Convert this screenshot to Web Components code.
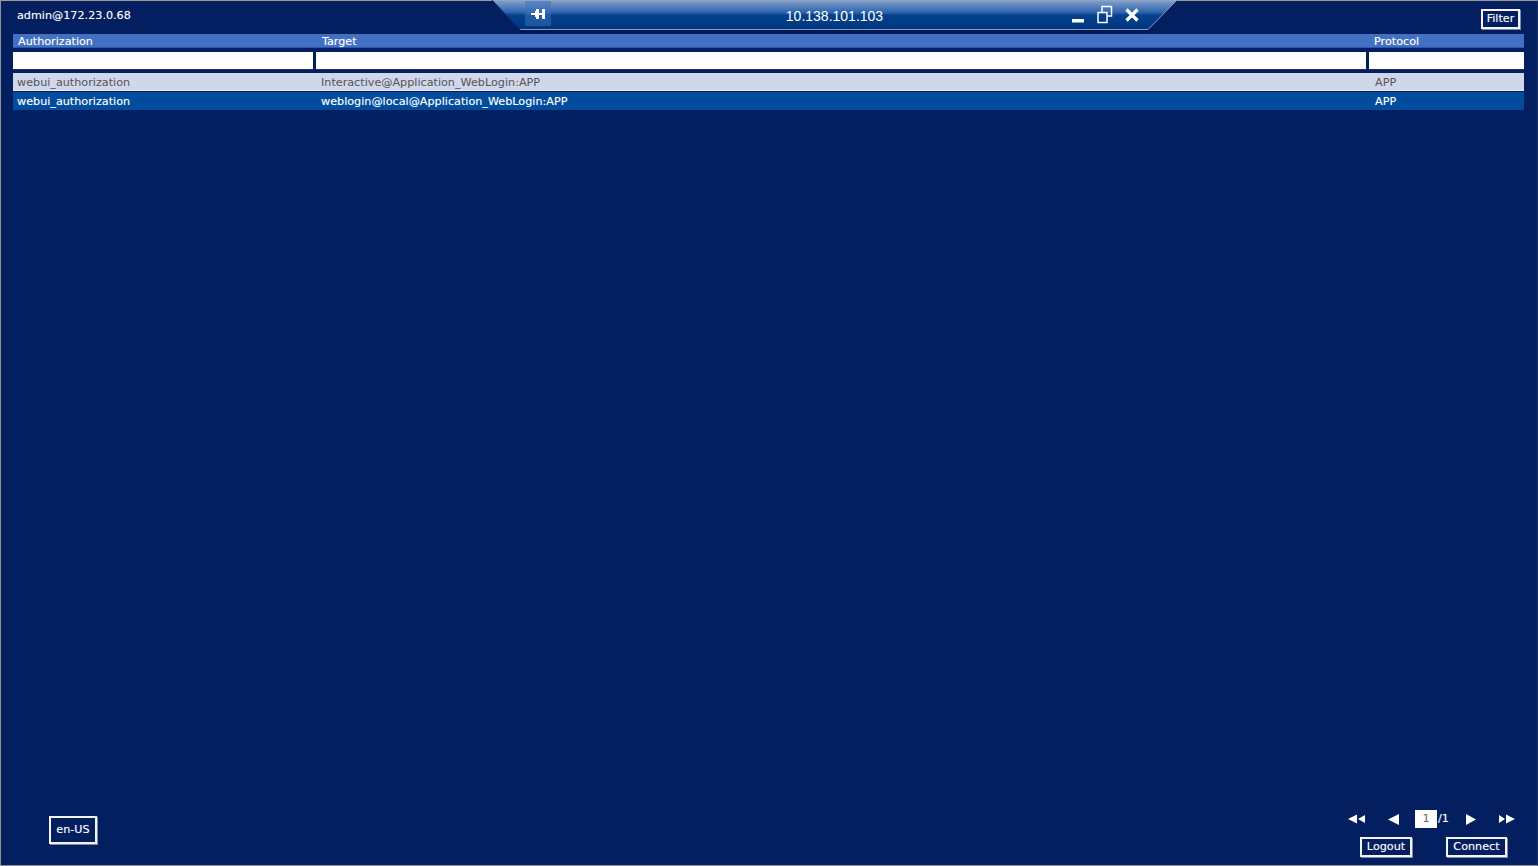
<!DOCTYPE html>
<html lang="en"><head><meta charset="utf-8"><title>Authorization</title>
<style>
html,body{margin:0;padding:0;height:100%;background:#031f60}
body{font:11.2px/14px "DejaVu Sans",sans-serif;color:#fff;overflow:hidden}
</style></head>
<body>
<x-app>
  <x-topbar slot="top" user="admin@172.23.0.68" host="10.138.101.103"></x-topbar>
  <x-grid slot="table">
    <x-row kind="head"><span>Authorization</span><span>Target</span><span>Protocol</span></x-row>
    <x-row kind="filter"></x-row>
    <x-row kind="light"><span>webui_authorization</span><span>Interactive@Application_WebLogin:APP</span><span>APP</span></x-row>
    <x-row kind="selected"><span>webui_authorization</span><span>weblogin@local@Application_WebLogin:APP</span><span>APP</span></x-row>
  </x-grid>
  <x-footer slot="bottom"></x-footer>
</x-app>

<script>
function def(name, html, setup){
  customElements.define(name, class extends HTMLElement{
    constructor(){super();this.attachShadow({mode:'open'}).innerHTML=html;}
    connectedCallback(){ if(setup) setup.call(this,this.shadowRoot); }
  });
}
const FONT='font-family:"DejaVu Sans",sans-serif;font-size:11.2px;line-height:14px;';
const GLOW='text-shadow:0 0 1px rgba(255,255,255,.35);';

def('x-app',`<style>
:host{display:flex;flex-direction:column;box-sizing:border-box;width:1538px;height:866px;background:#031f60;
border-top:1px solid #9a9a92;border-left:1px solid #8d918f;border-bottom:1px solid #8d918f;border-right:1px solid #1a2f66;color:#fff}
.table{flex:1;padding:0 12px}
</style><slot name="top"></slot><div class="table"><slot name="table"></slot></div><slot name="bottom"></slot>`);

def('x-btn',`<style>
:host{display:inline-flex;align-items:center;justify-content:center;box-sizing:border-box;border:2px solid #f4f4f4;
box-shadow:1px 1px 0 #7f8aa8;background:#031f60;color:#fff;${FONT}${GLOW}padding-bottom:1px}
</style><slot></slot>`);

def('x-topbar',`<style>
:host{display:grid;grid-template-columns:491px 685px 1fr;height:33px;${FONT}}
.user{padding:8px 0 0 16px;color:#fff;${GLOW}}
.right{display:flex;justify-content:flex-end;align-items:flex-start;padding:8px 17px 0 0}
x-btn{width:39px;height:20px}
</style>
<div class="user"></div><x-banner></x-banner>
<div class="right"><x-btn>Filter</x-btn></div>`,function(r){
  r.querySelector('.user').textContent=this.getAttribute('user');
  r.querySelector('x-banner').setAttribute('host',this.getAttribute('host'));
});

def('x-banner',`<style>
:host{display:block;position:relative;height:34px;margin-top:-1px}
svg.bg{position:absolute;left:0;top:0;width:685px;height:34px}
.row{position:relative;display:grid;grid-template-columns:33px 26px 1fr 27px 27px 27px 32px;height:30px;align-items:center}
.pin{grid-column:2;grid-row:1;align-self:start;height:25px;margin-top:1px;background:rgba(62,114,190,.5);display:flex;align-items:center;justify-content:center;padding:1px 0 0 2px;box-sizing:border-box}
.ip{grid-column:1 / -1;grid-row:1;font:14px/18px "Liberation Sans",sans-serif;text-align:center;color:#fff;padding-top:2px}
.ic{grid-row:1;display:flex;align-items:center;justify-content:center;margin-top:-4px}
</style>
<svg class="bg" viewBox="0 0 685 34" aria-hidden="true">
  <defs><linearGradient id="g" x1="0" y1="0" x2="0" y2="30" gradientUnits="userSpaceOnUse">
    <stop offset="0" stop-color="#a9aaa6"/><stop offset=".04" stop-color="#7b9ccb"/>
    <stop offset=".42" stop-color="#2d62ac"/><stop offset=".5" stop-color="#06418d"/>
    <stop offset=".85" stop-color="#003a82"/><stop offset="1" stop-color="#02327a"/></linearGradient></defs>
  <rect x="28" y="30" width="628" height="3" fill="#02174e"/>
  <polygon points="0,0 685,0 656,30 28,30" fill="url(#g)"/>
  <polyline points="28,29.5 656,29.5 685,0" fill="none" stroke="#7f9fd0" stroke-width="1"/>
  <polyline points="0,0 28,29.5" fill="none" stroke="#0a2f78" stroke-width="1"/>
</svg>
<div class="row">
  <div class="pin"><svg width="16" height="12" viewBox="0 0 16 12"><path fill="#fff" d="M0 5h4V3h1V1h3v4h3V1h3v10h-3V7H8v4H5V9H4V7H0z"/></svg></div>
  <div class="ip"></div>
  <div class="ic" style="grid-column:4"><svg width="14" height="24" viewBox="0 0 14 24"><rect x="1" y="18" width="12" height="3.500" fill="#fff"/></svg></div>
  <div class="ic" style="grid-column:5"><svg width="16" height="24" viewBox="0 0 16 24" fill="none" stroke="#fff" stroke-width="1.500"><rect x="1" y="11.500" width="9" height="10"/><path d="M5 11V5.500h9.500v9.500H10.500"/></svg></div>
  <div class="ic" style="grid-column:6"><svg width="16" height="24" viewBox="0 0 16 24"><path d="M2.500 8.500l11 11M13.500 8.500l-11 11" stroke="#fff" stroke-width="3.200" fill="none"/></svg></div>
</div>`,function(r){r.querySelector('.ip').textContent=this.getAttribute('host');});

def('x-grid',`<style>:host{display:flex;flex-direction:column;width:1511px}</style><slot></slot>`);

def('x-row',`<style>
:host{display:grid;grid-template-columns:304px 1053px 154px;${FONT}box-sizing:border-box;padding-top:1px}
:host([kind=head]){height:14px;background:#4271c4;color:#fff;border-bottom:1px solid #2d56a8;${GLOW}}
:host([kind=filter]){height:18px;margin:4px 0 3px;padding-top:0;column-gap:3px;grid-template-columns:300px 1050px 155px}
:host([kind=light]){height:18px;padding-top:2px;background:#d0d7eb;color:#555;border-bottom:1px solid #eef1fa}
:host([kind=selected]){height:18px;margin-top:1px;background:#024c9d;color:#fff;${GLOW}}
::slotted(span){padding-left:4px;align-self:center;white-space:nowrap}
::slotted(span:last-child){padding-left:5px}
:host([kind=head]) ::slotted(span){padding-left:5px}
:host([kind=head]) ::slotted(span:last-child){padding-left:4px}
.f{background:#fff;border-bottom:1px solid #1c2f66;box-sizing:border-box}
</style><slot></slot>`,function(r){
  if(this.getAttribute('kind')==='filter'&&!r.querySelector('.f')){
    for(let i=0;i<3;i++){const d=document.createElement('div');d.className='f';r.appendChild(d);}
  }
});

def('x-pager',`<style>
:host{display:flex;align-items:center;${FONT}${GLOW}height:18px;color:#fff}
.box{display:block;width:22px;height:18px;background:#fff;color:#666;text-align:center;line-height:18px;text-shadow:none;margin:0 1px 0 16px}
.of{width:11px}
svg{fill:#fff;display:block;flex:none}
</style>
<svg width="17" height="10" viewBox="0 0 17 10"><path d="M0 5l9-4.500v9zM10 5l7-4v8z"/></svg>
<svg width="11" height="11" viewBox="0 0 11 11" style="margin-left:23px"><path d="M0 5.500L11 0v11z"/></svg>
<span class="box">1</span><span class="of">/1</span>
<svg width="10" height="11" viewBox="0 0 10 11" style="margin-left:17px"><path d="M0 0l10 5.500L0 11z"/></svg>
<svg width="16" height="10" viewBox="0 0 16 10" style="margin-left:23px"><path d="M0 1l6 4-6 4zM7 .5L16 5l-9 4.500z"/></svg>`);

def('x-footer',`<style>
:host{display:flex;justify-content:space-between;align-items:flex-end;height:56px;padding:0 4px 8px 48px;${FONT}}
.lang{width:48px;height:28px;margin-bottom:13px}
.right{display:flex;flex-direction:column;align-items:flex-start;gap:9px;width:185px}
.btns{display:flex;gap:34px;margin-left:12px}
.l{width:52px;height:20px}.c{width:61px;height:20px}
</style>
<x-btn class="lang">en-US</x-btn>
<div class="right"><x-pager></x-pager><div class="btns"><x-btn class="l">Logout</x-btn><x-btn class="c">Connect</x-btn></div></div>`);
</script>
</body></html>
